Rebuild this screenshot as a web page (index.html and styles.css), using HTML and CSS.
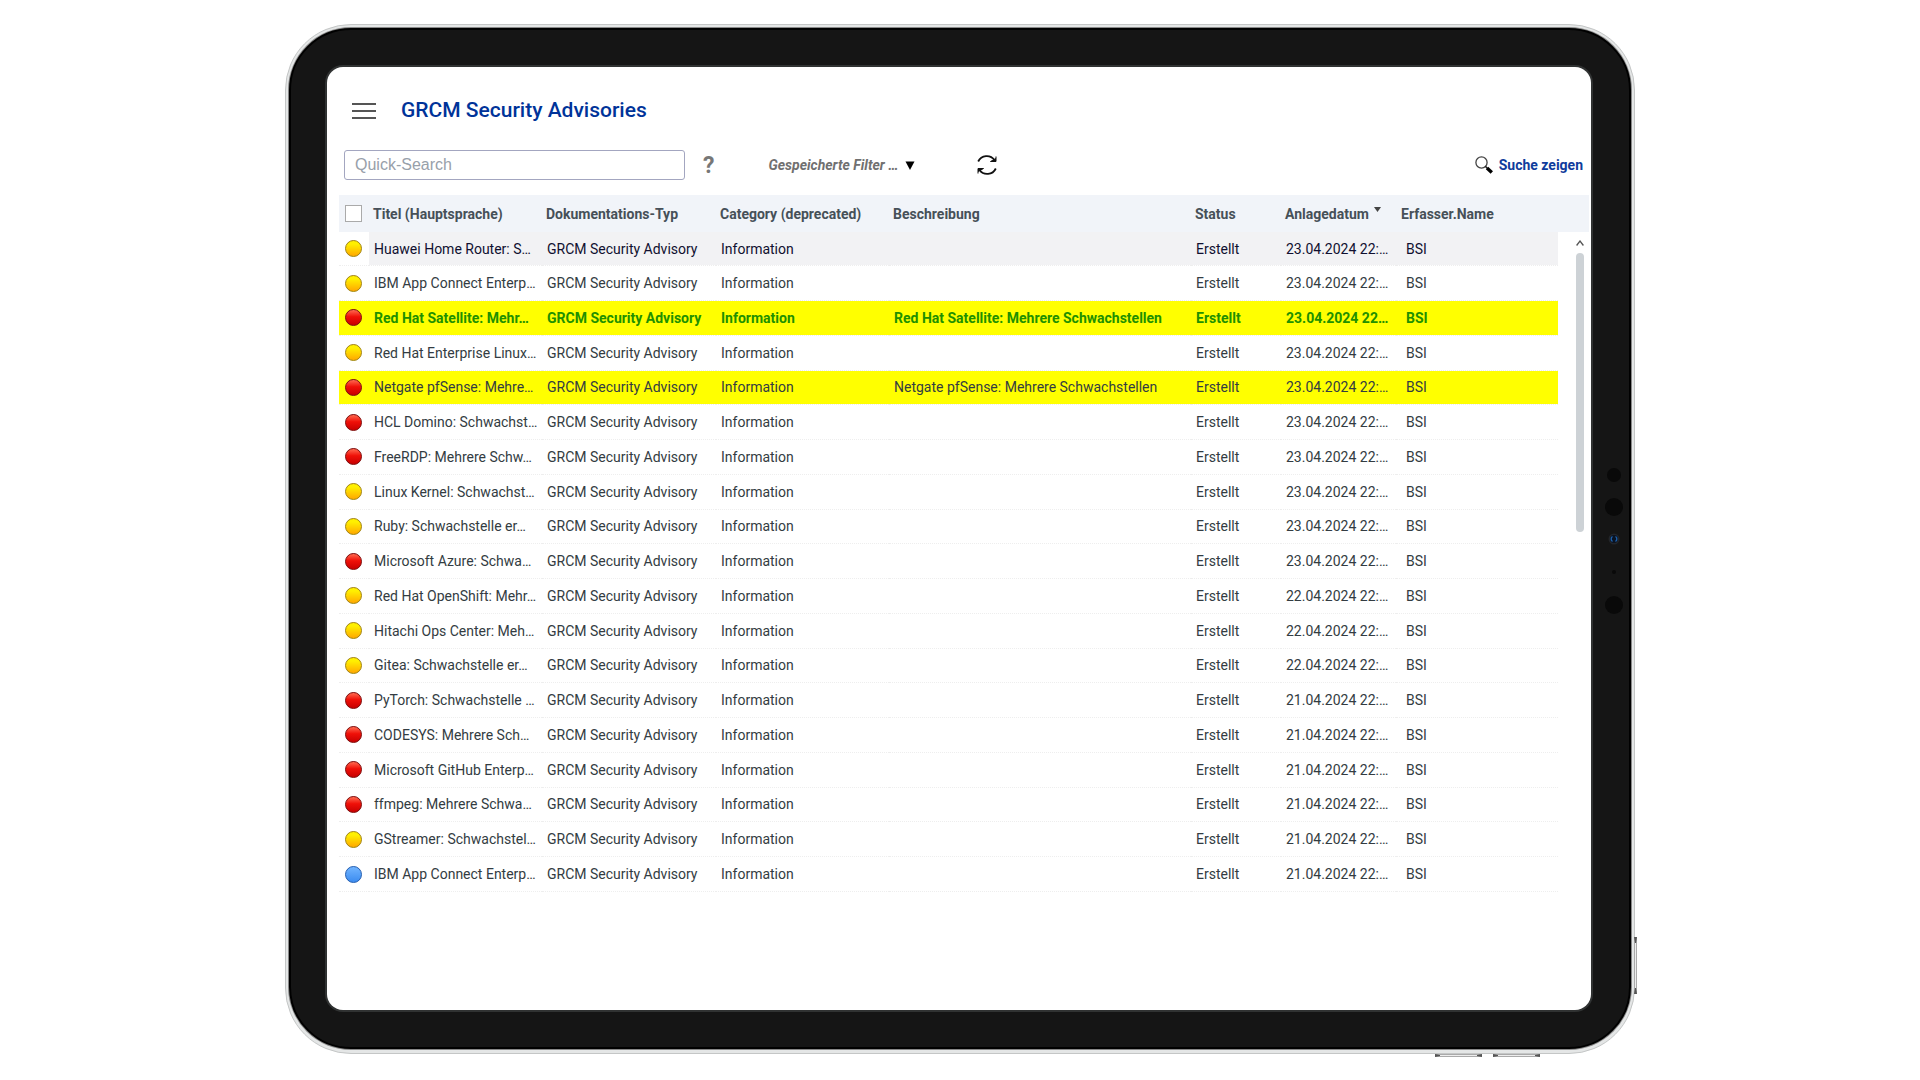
FILE: index.html
```
<!DOCTYPE html>
<html lang="de">
<head>
  <meta charset="UTF-8">
  <title>GRCM Security Advisories</title>
  <meta name="viewport" content="width=device-width, initial-scale=1">

  <link rel="stylesheet" href="styles.css">
</head>
<body>

  <div class="tablet">
    <div class="bezel">
      <main class="screen">

        <header class="titlebar">
          <button class="menu-btn" type="button" aria-label="Menü">
            <span></span>
            <span></span>
            <span></span>
          </button>
          <h1>GRCM Security Advisories</h1>
        </header>

        <div class="toolbar">
          <input class="quick-search" type="text" placeholder="Quick-Search" aria-label="Quick-Search">
          <button class="help-btn" type="button">?</button>
          <button class="filter-btn" type="button">
            <span>Gespeicherte Filter …</span>
            <svg width="10" height="9" viewBox="0 0 10 9"><path d="M0.5 0.5h9L5 9z" fill="#000"/></svg>
          </button>
          <button class="refresh-btn" type="button" aria-label="Aktualisieren">
            <svg width="20" height="20" viewBox="0 0 20 20" fill="none" stroke="#111" stroke-width="1.8">
              <path d="M1.2 6.500A9.500 9.500 0 0 1 17.500 5"/>
              <path d="M18.800 13.500A9.500 9.500 0 0 1 2.500 15"/>
              <path d="M19 1.500V6.500H13.500L19 3.500" fill="#111" stroke-width="1"/>
              <path d="M1 18.500V13.500H6.500L1 16.500" fill="#111" stroke-width="1"/>
            </svg>
          </button>
          <a class="search-link" href="#">
            <svg width="18" height="18" viewBox="0 0 18 18" fill="none">
              <circle cx="6.500" cy="6.500" r="5.600" stroke="#444" stroke-width="1.300"/>
              <path d="M10.300 10.300L12.300 12.300" stroke="#222" stroke-width="1.600"/>
              <path d="M12 12L16.800 16.600" stroke="#000" stroke-width="3.400"/>
            </svg>
            Suche zeigen
          </a>
        </div>

        <div class="list">
          <table class="advisories">
            <colgroup>
              <col class="col-check">
              <col class="col-title">
              <col class="col-type">
              <col class="col-category">
              <col class="col-desc">
              <col class="col-status">
              <col class="col-date">
              <col>
            </colgroup>
            <thead>
              <tr>
                <th><input type="checkbox" aria-label="Alle auswählen"></th>
                <th>Titel (Hauptsprache)</th>
                <th>Dokumentations-Typ</th>
                <th>Category (deprecated)</th>
                <th>Beschreibung</th>
                <th>Status</th>
                <th>Anlagedatum<svg class="sort" width="7" height="5" viewBox="0 0 7 5"><path d="M0 0h7L3.500 5z" fill="#444"/></svg></th>
                <th>Erfasser.Name</th>
              </tr>
            </thead>
            <tbody id="rows"></tbody>
          </table>
          <div class="scroll">
            <div class="scroll-head"></div>
            <svg width="8" height="6" viewBox="0 0 8 6"><path d="M0.600 5.500L4 1L7.400 5.500" fill="none" stroke="#555" stroke-width="1.300"/></svg>
            <div class="scroll-thumb"></div>
          </div>
        </div>

      </main>
    </div>

    <svg class="camera" width="20" height="150" viewBox="0 0 20 150">
      <circle cx="10" cy="10" r="7" fill="#090909"/>
      <circle cx="10" cy="42" r="9" fill="#090909"/>
      <circle cx="10" cy="74" r="5.500" fill="#232529"/>
      <circle cx="10" cy="74" r="4" fill="#0a1220"/>
      <path d="M8.500 71.500a3 3 0 0 0 0 5M11.500 71.500a3 3 0 0 1 0 5" fill="none" stroke="#1d5fa8" stroke-width="1.400"/>
      <circle cx="10" cy="107" r="2" fill="#090909"/>
      <circle cx="10" cy="140" r="9" fill="#090909"/>
    </svg>
    <span class="key key-side"></span>
    <span class="key key-left"></span>
    <span class="key key-right"></span>
  </div>

  <script>
    const advisories = [
      ['yellow', 'Huawei Home Router: S…', '23.04.2024 22:…', '', 'hover'],
      ['yellow', 'IBM App Connect Enterp…', '23.04.2024 22:…'],
      ['red', 'Red Hat Satellite: Mehr…', '23.04.2024 22…', 'Red Hat Satellite: Mehrere Schwachstellen', 'marked unread'],
      ['yellow', 'Red Hat Enterprise Linux…', '23.04.2024 22:…'],
      ['red', 'Netgate pfSense: Mehre…', '23.04.2024 22:…', 'Netgate pfSense: Mehrere Schwachstellen', 'marked'],
      ['red', 'HCL Domino: Schwachst…', '23.04.2024 22:…'],
      ['red', 'FreeRDP: Mehrere Schw…', '23.04.2024 22:…'],
      ['yellow', 'Linux Kernel: Schwachst…', '23.04.2024 22:…'],
      ['yellow', 'Ruby: Schwachstelle er…', '23.04.2024 22:…'],
      ['red', 'Microsoft Azure: Schwa…', '23.04.2024 22:…'],
      ['yellow', 'Red Hat OpenShift: Mehr…', '22.04.2024 22:…'],
      ['yellow', 'Hitachi Ops Center: Meh…', '22.04.2024 22:…'],
      ['yellow', 'Gitea: Schwachstelle er…', '22.04.2024 22:…'],
      ['red', 'PyTorch: Schwachstelle …', '21.04.2024 22:…'],
      ['red', 'CODESYS: Mehrere Sch…', '21.04.2024 22:…'],
      ['red', 'Microsoft GitHub Enterp…', '21.04.2024 22:…'],
      ['red', 'ffmpeg: Mehrere Schwa…', '21.04.2024 22:…'],
      ['yellow', 'GStreamer: Schwachstel…', '21.04.2024 22:…'],
      ['blue', 'IBM App Connect Enterp…', '21.04.2024 22:…']
    ];

    const rows = document.getElementById('rows');
    advisories.forEach(([level, title, date, desc = '', state = '']) => {
      const tr = document.createElement('tr');
      tr.className = state;

      const dot = document.createElement('span');
      dot.className = 'dot ' + level;
      tr.insertCell().append(dot);

      [title, 'GRCM Security Advisory', 'Information', desc, 'Erstellt', date, 'BSI'].forEach((text) => {
        tr.insertCell().textContent = text;
      });
      rows.append(tr);
    });
  </script>

</body>
</html>
```
FILE: styles.css
```
* {
  box-sizing: border-box;
}

body {
  font-family: Roboto, sans-serif;
  font-size: 14px;
  background: #fff;
  color: #333c42;
  margin: 0;
  padding: 24px 20px 20px;
}

button {
  padding: 0;
  border: none;
  background: none;
  font-family: inherit;
  cursor: pointer;
}

/* tablet frame */
.tablet {
  position: relative;
  max-width: 1350px;
  margin: 0 auto;
  padding: 3px 3px 4px;
  border: 1px solid #c4c6c6;
  border-radius: 66px;
  background: #e4e6e6;
}

.bezel {
  padding: 37px 38px 37px 36px;
  border: 2px solid #000;
  border-radius: 62px;
  background: #151515;
  box-shadow: 0 0 0 1px #888;
}

.screen {
  min-height: 943px;
  padding: 30px 2px 20px 12px;
  border-radius: 16px;
  background: #fff;
  box-shadow: 0 0 0 2px #303232;
}

.camera {
  position: absolute;
  right: 10px;
  top: 440px;
}

.key {
  position: absolute;
  border: 1px solid #aaa;
  background: #eee;
}

.key-side {
  right: -3px;
  top: 912px;
  width: 3px;
  height: 57px;
  border-top: 6px solid #555;
  border-bottom: 6px solid #555;
}

.key-left,
.key-right {
  bottom: -4px;
  width: 47px;
  height: 3px;
  border-left: 5px solid #555;
  border-right: 5px solid #555;
}

.key-left {
  right: 152px;
}

.key-right {
  right: 94px;
}

/* title and toolbar */
.titlebar {
  display: flex;
  align-items: center;
  gap: 25px;
  height: 27px;
  padding-left: 13px;
}

.menu-btn {
  display: flex;
  flex-direction: column;
  gap: 5px;
  width: 24px;
}

.menu-btn span {
  height: 2px;
  background: #555;
}

h1 {
  margin: 0;
  color: #003399;
  font-size: 21px;
  font-weight: 500;
  line-height: 27px;
}

.toolbar {
  display: flex;
  align-items: center;
  margin-top: 26px;
  padding: 0 6px 0 5px;
}

.quick-search {
  width: 341px;
  height: 30px;
  padding: 0 10px;
  border: 1px solid #a3a6c0;
  border-radius: 3px;
  background: #fff;
  font-family: "Liberation Sans", Arial, sans-serif;
  font-size: 16px;
}

.quick-search::placeholder {
  color: #98a0aa;
}

.help-btn {
  margin-left: 18px;
  color: #777;
  font-size: 23px;
  font-weight: 700;
}

.filter-btn {
  display: flex;
  align-items: center;
  gap: 7px;
  margin-left: 54px;
  color: #707070;
  font-size: 14px;
  font-style: italic;
  font-weight: 700;
}

.refresh-btn {
  display: flex;
  margin-left: 62px;
}

.search-link {
  display: flex;
  align-items: center;
  gap: 6px;
  margin-left: auto;
  color: #103c9c;
  font-weight: 700;
  text-decoration: none;
}

/* advisory list */
.list {
  display: flex;
  margin-top: 15px;
}

.advisories {
  flex: 1;
  height: 697px;
  border-collapse: collapse;
  table-layout: fixed;
}

.col-check {
  width: 30px;
}

.col-title,
.col-category {
  width: 173px;
}

.col-type {
  width: 174px;
}

.col-desc {
  width: 302px;
}

.col-status {
  width: 90px;
}

.col-date {
  width: 115px;
}

th,
td {
  overflow: hidden;
  padding: 0 0 0 5px;
  text-align: left;
  white-space: nowrap;
}

thead tr {
  height: 37px;
  background: #f1f4f9;
}

th {
  padding-left: 4px;
  color: #465058;
  font-weight: 700;
}

th:last-child {
  padding-left: 5px;
}

td:last-child {
  padding-left: 10px;
}

td {
  border-bottom: 1px dotted #eee;
}

th:first-child,
td:first-child {
  padding: 0 0 0 6px;
}

th input {
  display: block;
  appearance: none;
  width: 17px;
  height: 17px;
  margin: 0;
  border: 1px solid #aaa;
  background: #fff;
}

.sort {
  margin: 0 0 7px 5px;
}

.hover td:not(:first-child) {
  background: #f2f2f4;
  color: #101030;
}

.marked {
  background: #ff0;
}

.unread {
  color: #219000;
  font-weight: 700;
}

.dot {
  display: block;
  width: 17px;
  height: 17px;
  border: 1px solid #a08418;
  border-radius: 50%;
  background: linear-gradient(#fff000 20%, #ffa800);
}

.dot.red {
  border-color: #7c1010;
  background: linear-gradient(#ff6a50, #f01008 45%, #c80000);
}

.dot.blue {
  border-color: #2860b0;
  background: linear-gradient(#70b4ff, #3c8cf0);
}

.scroll {
  display: flex;
  flex-direction: column;
  align-items: flex-end;
  width: 31px;
}

.scroll-head {
  width: 100%;
  height: 37px;
  background: #f1f4f9;
}

.scroll svg {
  margin: 8px 5px 7px 0;
}

.scroll-thumb {
  width: 8px;
  height: 279px;
  margin-right: 5px;
  border-radius: 4px;
  background: #cdd2d6;
}
```
